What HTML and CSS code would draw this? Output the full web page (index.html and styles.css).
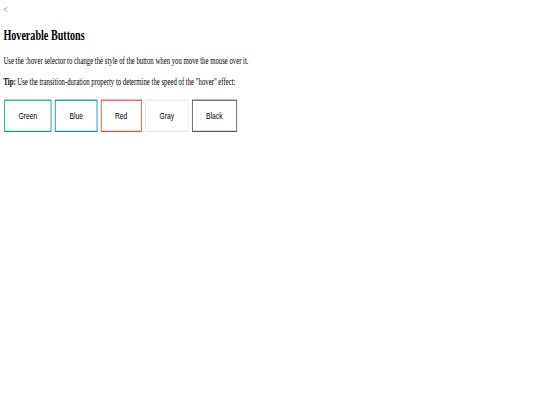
FILE: index.html
```html
<!DOCTYPE html>
<html>
<head>
<meta charset="utf-8">
<title>Hoverable Buttons</title>
<link rel="stylesheet" href="styles.css">
</head>
<body>
<div class="frame">
  <div class="page">
    <div class="back">&lt;</div>
    <h2 class="title">Hoverable Buttons</h2>
    <p class="text">Use the :hover selector to change the style of the button when you move the mouse over it.</p>
    <p class="text"><b>Tip:</b> Use the transition-duration property to determine the speed of the "hover" effect:</p>
    <div class="buttons">
      <button class="button button-green">Green</button>
      <button class="button button-blue">Blue</button>
      <button class="button button-red">Red</button>
      <button class="button button-gray">Gray</button>
      <button class="button button-black">Black</button>
    </div>
  </div>
</div>
</body>
</html>
```
FILE: styles.css
```css
html, body {
  margin: 0;
  padding: 0;
  background: #ffffff;
  overflow: hidden;
}

.frame {
  width: 540px;
  height: 405px;
  overflow: hidden;
}

.page {
  width: 1264px;
  padding: 8px;
  font-family: "Liberation Serif", "Times New Roman", serif;
  font-size: 16px;
  color: #000000;
  transform: scale(0.421875, 0.6);
  transform-origin: 0 0;
}

.back {
  color: #444444;
  line-height: 18px;
}

.title {
  font-size: 24px;
  font-weight: bold;
  margin: 20px 0;
}

.text {
  margin: 16px 0;
}

.buttons {
  display: flex;
  gap: 8px;
  padding-left: 2px;
  margin-top: 21px;
}

.button {
  background-color: #ffffff;
  color: #000000;
  border: 2px solid #04AA6D;
  padding: 16px 32px;
  font-family: "Liberation Sans", Arial, sans-serif;
  font-size: 16px;
  line-height: 18px;
}

.button-green { border-color: #04AA6D; }
.button-blue { border-color: #008CBA; }
.button-red { border-color: #f44336; }
.button-gray { border-color: #e7e7e7; }
.button-black { border-color: #555555; }
```
